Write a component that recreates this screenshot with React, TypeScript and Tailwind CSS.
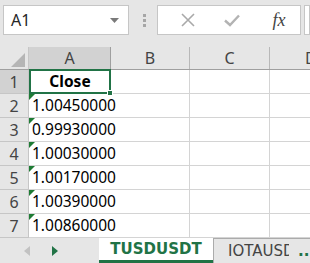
import React from "react";

const rows = [
  "Close",
  "1.00450000",
  "0.99930000",
  "1.00030000",
  "1.00170000",
  "1.00390000",
  "1.00860000",
];

const font = { fontFamily: '"Noto Sans", "Open Sans", sans-serif' };
const wide = { fontFamily: '"DejaVu Sans", "Noto Sans", sans-serif' };

function Tri() {
  return (
    <svg className="absolute left-0 top-0" width="6" height="6" viewBox="0 0 6 6">
      <polygon points="0,0 6,0 0,6" fill="#1e7b34" />
    </svg>
  );
}

export default function App() {
  return (
    <div className="w-[310px] h-[263px] overflow-hidden bg-white flex flex-col" style={font}>
      {/* top bar */}
      <div className="h-[47px] shrink-0 bg-[#e6e6e6] flex items-start pt-[5px] pl-[3px]">
        <div className="w-[126px] h-[30px] bg-white border border-[#c6c6c6] flex items-center pl-[7px] pr-[9px] justify-between">
          <span className="text-[16px] text-[#262626] leading-none">A1</span>
          <svg width="9" height="5" viewBox="0 0 9 5">
            <polygon points="0,0 9,0 4.5,5" fill="#7a7a7a" />
          </svg>
        </div>
        <div className="w-[30px] h-[30px] flex items-center justify-center">
          <div className="flex flex-col gap-[2px]">
            <div className="w-[3px] h-[3px] bg-[#a6a6a6]" />
            <div className="w-[3px] h-[3px] bg-[#a6a6a6]" />
            <div className="w-[3px] h-[3px] bg-[#a6a6a6]" />
          </div>
        </div>
        <div className="ml-[-2px] w-[144px] h-[30px] bg-white border border-[#c6c6c6] flex items-center">
          <div className="w-[46px] flex justify-center pl-[14px]">
            <svg width="14" height="14" viewBox="0 0 14 14">
              <path d="M1 1 L13 13 M13 1 L1 13" stroke="#a9a9a9" strokeWidth="1.6" />
            </svg>
          </div>
          <div className="w-[46px] flex justify-center pl-[10px]">
            <svg width="16" height="13" viewBox="0 0 16 13">
              <path d="M1 6.5 L6 11 L15 1.5" stroke="#b3b3b3" strokeWidth="2.4" fill="none" />
            </svg>
          </div>
          <div className="flex-1 flex justify-center pl-[8px]">
            <span
              className="text-[18px] italic text-[#444] leading-none"
              style={{ fontFamily: '"Liberation Serif", serif' }}
            >
              fx
            </span>
          </div>
        </div>
        <div className="ml-[3px] flex-1 h-[30px] bg-white border border-[#c6c6c6]" />
      </div>

      {/* column headers */}
      <div className="h-[23px] shrink-0 flex bg-[#e6e6e6] border-b border-[#9f9f9f] text-[16px] text-[#444] leading-none">
        <div className="w-[29px] shrink-0 border-r border-[#c6c6c6] relative">
          <svg className="absolute right-[3px] bottom-[2px]" width="14" height="14" viewBox="0 0 14 14">
            <polygon points="14,0 14,14 0,14" fill="#b5b5b5" />
          </svg>
        </div>
        <div className="w-[82px] shrink-0 bg-[#d2d2d2] border-r border-[#9f9f9f] flex items-center justify-center">A</div>
        <div className="w-[79px] shrink-0 border-r border-[#b8b8b8] flex items-center justify-center">B</div>
        <div className="w-[80px] shrink-0 border-r border-[#b8b8b8] flex items-center justify-center">C</div>
        <div className="flex-1 flex items-center pl-[35px]">D</div>
      </div>

      {/* rows */}
      {rows.map((v, i) => (
        <div key={i} className="h-[24px] shrink-0 flex text-[15.5px] leading-none">
          <div
            className={
              "w-[29px] shrink-0 border-r border-b border-[#c6c6c6] flex items-center justify-center text-[16px] text-[#444] " +
              (i === 0 ? "bg-[#d2d2d2]" : "bg-[#e6e6e6]")
            }
          >
            {i + 1}
          </div>
          {i === 0 ? (
            <div className="w-[82px] shrink-0 border-r border-b border-[#d4d4d4] relative">
              <div className="absolute left-0 top-[-1px] w-[82px] h-[25px] border-2 border-[#217346] flex items-center justify-center font-bold text-black">
                Close
              </div>
              <div className="absolute right-[-3px] bottom-[-3px] w-[6px] h-[6px] bg-[#217346] border border-white" />
            </div>
          ) : (
            <div className="w-[82px] shrink-0 border-b border-[#d4d4d4] relative">
              <Tri />
              <div className="absolute left-[3px] top-0 h-full flex items-center whitespace-nowrap text-black z-10">
                {v}
              </div>
            </div>
          )}
          <div className="w-[79px] shrink-0 border-r border-b border-[#d4d4d4]" />
          <div className="w-[80px] shrink-0 border-r border-b border-[#d4d4d4]" />
          <div className="flex-1 border-b border-[#d4d4d4]" />
        </div>
      ))}

      {/* tab bar */}
      <div className="flex-1 flex bg-[#e6e6e6] text-[15px] leading-none" style={wide}>
        <div className="w-[99px] shrink-0 flex items-center">
          <svg className="ml-[24px]" width="6" height="10" viewBox="0 0 6 10">
            <polygon points="6,0 6,10 0,5" fill="#c2c2c2" />
          </svg>
          <svg className="ml-[22px]" width="6" height="10" viewBox="0 0 6 10">
            <polygon points="0,0 0,10 6,5" fill="#217346" />
          </svg>
        </div>
        <div className="w-[114px] shrink-0 bg-white border-b-[3px] border-[#217346] flex items-center justify-center font-bold text-[#217346]">
          TUSDUSDT
        </div>
        <div className="flex-1 border-t border-l border-[#ababab] flex items-center pl-[14px] overflow-hidden whitespace-nowrap text-[#444]">
          <span className="w-[61px] shrink-0 overflow-hidden">IOTAUSD</span>
          <span className="ml-[9px] text-[#217346] font-bold">..</span>
        </div>
      </div>
    </div>
  );
}
